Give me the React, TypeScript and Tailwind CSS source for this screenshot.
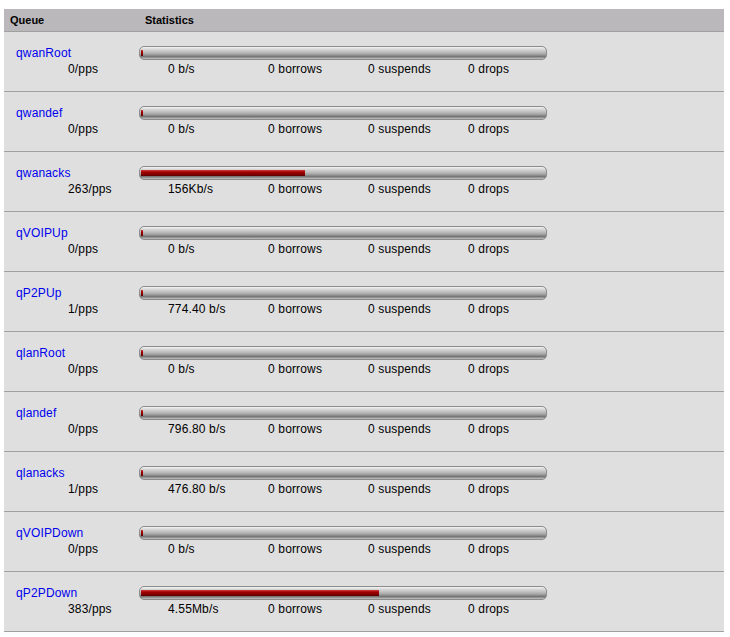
import React from "react";

type Q = { name: string; pps: string; rate: string; fill: number };

const rows: Q[] = [
  { name: "qwanRoot", pps: "0/pps", rate: "0 b/s", fill: 2 },
  { name: "qwandef", pps: "0/pps", rate: "0 b/s", fill: 2 },
  { name: "qwanacks", pps: "263/pps", rate: "156Kb/s", fill: 164 },
  { name: "qVOIPUp", pps: "0/pps", rate: "0 b/s", fill: 2 },
  { name: "qP2PUp", pps: "1/pps", rate: "774.40 b/s", fill: 2 },
  { name: "qlanRoot", pps: "0/pps", rate: "0 b/s", fill: 2 },
  { name: "qlandef", pps: "0/pps", rate: "796.80 b/s", fill: 2 },
  { name: "qlanacks", pps: "1/pps", rate: "476.80 b/s", fill: 2 },
  { name: "qVOIPDown", pps: "0/pps", rate: "0 b/s", fill: 2 },
  { name: "qP2PDown", pps: "383/pps", rate: "4.55Mb/s", fill: 238 },
];

function Bar({ fill }: { fill: number }) {
  return (
    <div className="w-[408px] h-[14px] rounded-[5px] border border-[#8c8c8c] bg-[linear-gradient(to_bottom,#f4f4f4_0%,#d8d8d8_18%,#c0c0c0_40%,#a8a8a8_58%,#747474_80%,#c4c4c4_100%)] flex items-center px-[1px]">
      <div
        className="h-[6px] bg-[linear-gradient(to_bottom,#d04040_0%,#a00000_35%,#8a0000_65%,#5a0000_100%)]"
        style={{ width: fill }}
      />
    </div>
  );
}

export default function App() {
  return (
    <div className="bg-white w-[730px] h-[637px] pt-[9px] pl-[4px] font-['Liberation_Sans',Arial,sans-serif] text-black">
      <div className="w-[720px]">
        <div className="flex h-[23px] bg-[#bab8ba] border-b border-[#a0a0a0] text-[11px] font-bold items-center">
          <div className="w-[135px] pl-[6px]">Queue</div>
          <div className="pl-[6px]">Statistics</div>
        </div>
        {rows.map((r) => (
          <div
            key={r.name}
            className="flex h-[60px] bg-[#dfdfdf] border-b border-[#a0a0a0] text-[12px] leading-[14px] tracking-[0.15px]"
          >
            <div className="w-[135px] pl-[12px] pt-[14px]">
              <div className="text-[#0000ee]">{r.name}</div>
              <div className="pl-[52px] mt-[2px]">{r.pps}</div>
            </div>
            <div className="pt-[14px]">
              <Bar fill={r.fill} />
              <div className="flex pl-[29px] mt-[2px]">
                <span className="w-[100px]">{r.rate}</span>
                <span className="w-[100px]">0 borrows</span>
                <span className="w-[100px]">0 suspends</span>
                <span className="w-[100px]">0 drops</span>
              </div>
            </div>
          </div>
        ))}
      </div>
    </div>
  );
}
